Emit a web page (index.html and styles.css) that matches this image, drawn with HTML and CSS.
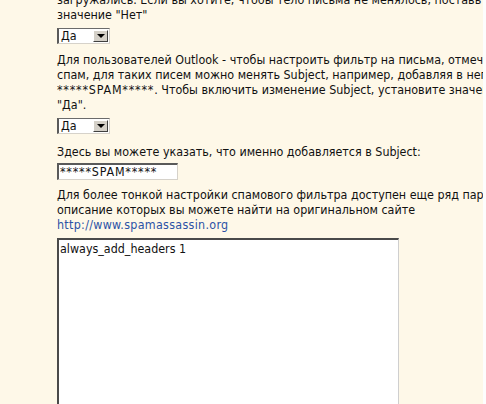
FILE: index.html
```html
<!DOCTYPE html>
<html>
<head>
<meta charset="utf-8">
<link rel="stylesheet" href="styles.css">
</head>
<body>
<div class="page">
  <div class="content">
    <p class="para">загружались. Если вы хотите, чтобы тело письма не менялось, поставьте<br>значение "Нет"</p>
    <div class="ctl ctl-sel1"><span class="select"><span class="sel-val">Да</span><span class="sel-btn"><span class="tri"></span></span></span></div>
    <p class="para para2">Для пользователей Outlook - чтобы настроить фильтр на письма, отмеченные как<br>спам, для таких писем можно менять Subject, например, добавляя в него<br><span class="stars">*****SPAM*****</span>. Чтобы включить изменение Subject, установите значение<br>"Да".</p>
    <div class="ctl ctl-sel2"><span class="select"><span class="sel-val">Да</span><span class="sel-btn"><span class="tri"></span></span></span></div>
    <p class="para para3">Здесь вы можете указать, что именно добавляется в Subject:</p>
    <div class="ctl ctl-input"><span class="input"><span class="stars">*****SPAM*****</span></span></div>
    <p class="para para4">Для более тонкой настройки спамового фильтра доступен еще ряд параметров,<br>описание которых вы можете найти на оригинальном сайте<br><a class="link" href="#">http://www.spamassassin.org</a></p>
    <div class="ctl ctl-area"><div class="textarea">always_add_headers 1</div></div>
  </div>
</div>
</body>
</html>
```
FILE: styles.css
```css
html { background: #fdfdfd; }
body {
  margin: 0;
  font-family: "DejaVu Sans Condensed", "DejaVu Sans", sans-serif;
  font-stretch: condensed;
  font-size: 12.4px;
  color: #111;
}
.page {
  width: 483px;
  height: 404px;
  overflow: hidden;
  background: #fef8e8;
}
.content {
  margin-top: -8px;
  padding-left: 57px;
}
.para {
  margin: 0;
  line-height: 15px;
  white-space: nowrap;
}
.stars { letter-spacing: 0.8px; }
.ctl { line-height: 0; }
.ctl-sel1 { margin-top: 6px; }
.para2 { margin-top: 8px; }
.ctl-sel2 { margin-top: 6px; }
.para3 { margin-top: 10px; }
.ctl-input { margin-top: 4px; }
.para4 { margin-top: 7px; }
.ctl-area { margin-top: 6px; }

.select {
  display: inline-flex;
  align-items: center;
  width: 53px;
  height: 16px;
  box-sizing: border-box;
  background: #fff;
  border-top: 1px solid #6b6b6b;
  border-left: 2px solid #5a5a5a;
  border-right: 1px solid #d6d2ca;
  border-bottom: 1px solid #d6d2ca;
}
.sel-val {
  flex: 1;
  padding-left: 2px;
  line-height: 14px;
}
.sel-btn {
  width: 15px;
  height: 12px;
  margin-right: 1px;
  box-sizing: border-box;
  background: #d4d0c8;
  border-top: 1px solid #ffffff;
  border-left: 1px solid #ffffff;
  border-right: 1px solid #404040;
  border-bottom: 1px solid #404040;
  display: flex;
  align-items: center;
  justify-content: center;
}
.tri {
  width: 0;
  height: 0;
  border-left: 4px solid transparent;
  border-right: 4px solid transparent;
  border-top: 4px solid #000;
}
.input {
  display: inline-block;
  width: 121px;
  height: 17px;
  box-sizing: border-box;
  background: #fff;
  border-top: 2px solid #5a5a5a;
  border-left: 2px solid #5a5a5a;
  border-right: 1px solid #d6d2ca;
  border-bottom: 1px solid #d6d2ca;
  padding-left: 1px;
  line-height: 14px;
  white-space: nowrap;
}
.link { color: #2b52a6; text-decoration: none; letter-spacing: 0.3px; }
.textarea {
  width: 342px;
  height: 200px;
  box-sizing: border-box;
  background: #fff;
  border-top: 2px solid #4a4a4a;
  border-left: 2px solid #4a4a4a;
  border-right: 1px solid #cfcfcf;
  border-bottom: 1px solid #cfcfcf;
  padding: 2px 1px;
  line-height: 14px;
}
```
